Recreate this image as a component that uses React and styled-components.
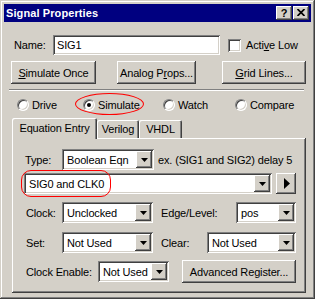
import React from 'react';
import styled, { createGlobalStyle } from 'styled-components';

const FACE = '#D4D0C8';
const SHADOW = '#808080';
const DARK = '#404040';

const Global = createGlobalStyle`
  html, body { margin: 0; padding: 0; background: ${FACE}; }
  body {
    font-family: "Liberation Sans", Arial, sans-serif;
    font-size: 11px;
    letter-spacing: -0.15px;
    color: #000;
  }
  * { box-sizing: border-box; }
`;

const raised = `box-shadow: inset -1px -1px ${DARK}, inset 1px 1px #fff, inset -2px -2px ${SHADOW}, inset 2px 2px ${FACE};`;
const sunken = `box-shadow: inset 1px 1px ${SHADOW}, inset -1px -1px #fff, inset 2px 2px ${DARK}, inset -2px -2px ${FACE};`;

const Window = styled.div`
  position: relative;
  width: 315px;
  height: 299px;
  background: ${FACE};
  padding: 4px;
  display: flex;
  flex-direction: column;
  box-shadow: inset -1px -1px ${DARK}, inset 1px 1px ${FACE}, inset -2px -2px ${SHADOW}, inset 2px 2px #fff;
`;

const TitleBar = styled.div`
  height: 18px;
  background: #000080;
  display: flex;
  align-items: center;
  justify-content: space-between;
  padding: 0 2px 0 2px;
`;

const Title = styled.div`
  color: #fff;
  font-weight: bold;
  font-size: 11px;
  letter-spacing: 0.1px;
`;

const CapButtons = styled.div`
  display: flex;
  gap: 1px;
`;

const CapButton = styled.div`
  width: 16px;
  height: 14px;
  background: ${FACE};
  ${raised}
  display: flex;
  align-items: center;
  justify-content: center;
  font-weight: bold;
  font-size: 11px;
  padding-bottom: 1px;
`;

const Body = styled.div`
  display: flex;
  flex-direction: column;
  padding-top: 13px;
`;

const NameRow = styled.div`
  display: flex;
  align-items: center;
  height: 20px;
  padding-left: 10px;
`;

const Label = styled.span`
  width: ${p => p.$w || 'auto'}px;
  margin-left: ${p => p.$ml || 0}px;
  padding-left: ${p => p.$pl || 0}px;
  flex: none;
  white-space: nowrap;
`;

const TextBox = styled.div`
  width: ${p => p.$w}px;
  height: 20px;
  background: #fff;
  ${sunken}
  display: flex;
  align-items: center;
  padding-left: 4px;
`;

const CheckBox = styled.div`
  width: 13px;
  height: 13px;
  background: #fff;
  margin-left: 8px;
  ${sunken}
`;

const ButtonRow = styled.div`
  display: flex;
  margin-top: 6px;
  padding-left: 7px;
`;

const PushButton = styled.div`
  width: ${p => p.$w}px;
  height: 23px;
  margin-left: ${p => p.$ml || 0}px;
  background: ${FACE};
  ${raised}
  display: flex;
  align-items: center;
  justify-content: center;
  white-space: nowrap;
  flex: none;
`;

const Separator = styled.div`
  margin: 5px 0 0 5px;
  width: 295px;
  height: 2px;
  border-top: 1px solid ${SHADOW};
  border-bottom: 1px solid #fff;
`;

const RadioRow = styled.div`
  display: grid;
  grid-template-columns: 66px 80px 72px auto;
  height: 14px;
  margin-top: 7px;
  padding-left: 13px;
  align-items: center;
`;

const RadioItem = styled.div`
  display: flex;
  align-items: center;
  gap: 3px;
`;

const RadioCircle = styled.div`
  width: 12px;
  height: 12px;
  border-radius: 50%;
  background: #fff;
  border: 1px solid;
  border-color: ${SHADOW} #fff #fff ${SHADOW};
  box-shadow: inset 1px 1px ${DARK}, inset -1px -1px ${FACE};
  display: flex;
  align-items: center;
  justify-content: center;
  &::after {
    content: '';
    display: ${p => (p.$on ? 'block' : 'none')};
    width: 4px;
    height: 4px;
    border-radius: 50%;
    background: #000;
  }
`;

const TabStrip = styled.div`
  display: flex;
  align-items: flex-end;
  height: 20px;
  margin-top: 6px;
  padding-left: 8px;
`;

const Tab = styled.div`
  position: relative;
  z-index: 1;
  width: ${p => p.$w}px;
  height: ${p => (p.$active ? 21 : 18)}px;
  margin-bottom: ${p => (p.$active ? -1 : 0)}px;
  background: ${FACE};
  border-radius: 2px 2px 0 0;
  box-shadow: inset 1px 1px #fff, inset -1px 0 ${DARK}, inset -2px 0 ${SHADOW};
  display: flex;
  align-items: center;
  justify-content: center;
  padding-bottom: ${p => (p.$active ? 2 : 0)}px;
  flex: none;
`;

const Panel = styled.div`
  margin-left: 8px;
  width: 294px;
  height: 155px;
  padding: 11px 0 0 12px;
  display: flex;
  flex-direction: column;
  box-shadow: inset -1px -1px ${DARK}, inset 1px 1px #fff, inset -2px -2px ${SHADOW};
`;

const Row = styled.div`
  display: flex;
  align-items: center;
  height: ${p => p.$h || 21}px;
  margin-top: ${p => p.$mt || 0}px;
`;

const Combo = styled.div`
  width: ${p => p.$w}px;
  height: 21px;
  margin-left: ${p => p.$ml || 0}px;
  background: #fff;
  ${sunken}
  display: flex;
  align-items: stretch;
  padding: 2px;
  flex: none;
`;

const ComboText = styled.div`
  flex: 1;
  display: flex;
  align-items: center;
  padding-left: 3px;
  white-space: nowrap;
  overflow: hidden;
`;

const DropButton = styled.div`
  width: 16px;
  background: ${FACE};
  ${raised}
  display: flex;
  align-items: center;
  justify-content: center;
  flex: none;
`;

const Hint = styled.span`
  margin-left: 4px;
  white-space: nowrap;
`;

const ArrowButton = styled.div`
  width: 20px;
  height: 21px;
  margin-left: 4px;
  background: ${FACE};
  ${raised}
  display: flex;
  align-items: center;
  justify-content: center;
  padding-left: 1px;
`;

const RedEllipse = styled.div`
  position: absolute;
  left: 75px;
  top: 93px;
  width: 69px;
  height: 22px;
  border: 1px solid #ff0000;
  border-radius: 50%;
  pointer-events: none;
`;

const RedBox = styled.div`
  position: absolute;
  left: 21px;
  top: 170px;
  width: 90px;
  height: 27px;
  border: 1px solid #ff0000;
  border-radius: 10px;
  pointer-events: none;
`;

const DownArrow = () => (
  <svg width="7" height="4" viewBox="0 0 7 4">
    <polygon points="0,0 7,0 3.5,4" fill="#000" />
  </svg>
);

const ComboBox = ({ w, ml, children }) => (
  <Combo $w={w} $ml={ml}>
    <ComboText>{children}</ComboText>
    <DropButton>
      <DownArrow />
    </DropButton>
  </Combo>
);

const Radio = ({ on, children }) => (
  <RadioItem>
    <RadioCircle $on={on} />
    <span>{children}</span>
  </RadioItem>
);

export default function App() {
  return (
    <>
      <Global />
      <Window>
        <TitleBar>
          <Title>Signal Properties</Title>
          <CapButtons>
            <CapButton>?</CapButton>
            <CapButton>
              <svg width="8" height="7" viewBox="0 0 8 7">
                <path d="M0.5 0 L7.5 7 M7.5 0 L0.5 7" stroke="#000" strokeWidth="1.7" />
              </svg>
            </CapButton>
          </CapButtons>
        </TitleBar>
        <Body>
          <NameRow>
            <Label $w={39}>Name:</Label>
            <TextBox $w={167}>SIG1</TextBox>
            <CheckBox />
            <Label $ml={5}>
              Acti<u>v</u>e Low
            </Label>
          </NameRow>
          <ButtonRow>
            <PushButton $w={85}>
              <u>S</u>imulate Once
            </PushButton>
            <PushButton $w={79} $ml={21}>
              Analog P<u>r</u>ops...
            </PushButton>
            <PushButton $w={84} $ml={26}>
              <u>G</u>rid Lines...
            </PushButton>
          </ButtonRow>
          <Separator />
          <RadioRow>
            <Radio>Drive</Radio>
            <Radio on>Simulate</Radio>
            <Radio>Watch</Radio>
            <Radio>Compare</Radio>
          </RadioRow>
          <TabStrip>
            <Tab $w={85} $active>Equation Entry</Tab>
            <Tab $w={42}>Verilog</Tab>
            <Tab $w={43}>VHDL</Tab>
          </TabStrip>
          <Panel>
            <Row>
              <Label $w={38} $pl={1}>Type:</Label>
              <ComboBox w={92}>Boolean Eqn</ComboBox>
              <Hint>ex. (SIG1 and SIG2) delay 5</Hint>
            </Row>
            <Row $mt={3}>
              <ComboBox w={248}>SIG0 and CLK0</ComboBox>
              <ArrowButton>
                <svg width="6" height="11" viewBox="0 0 6 11">
                  <polygon points="0,0 6,5.5 0,11" fill="#000" />
                </svg>
              </ArrowButton>
            </Row>
            <Row $mt={8}>
              <Label $w={38} $pl={2}>Clock:</Label>
              <ComboBox w={91}>Unclocked</ComboBox>
              <Label $w={75} $ml={8}>Edge/Level:</Label>
              <ComboBox w={60}>pos</ComboBox>
            </Row>
            <Row $mt={9}>
              <Label $w={38} $pl={2}>Set:</Label>
              <ComboBox w={91}>Not Used</ComboBox>
              <Label $w={46} $ml={8}>Clear:</Label>
              <ComboBox w={89}>Not Used</ComboBox>
            </Row>
            <Row $mt={7} $h={23}>
              <Label $w={74} $pl={2}>Clock Enable:</Label>
              <ComboBox w={71}>Not Used</ComboBox>
              <PushButton $w={114} $ml={13}>
                Advanced Register...
              </PushButton>
            </Row>
          </Panel>
        </Body>
        <RedEllipse />
        <RedBox />
      </Window>
    </>
  );
}
